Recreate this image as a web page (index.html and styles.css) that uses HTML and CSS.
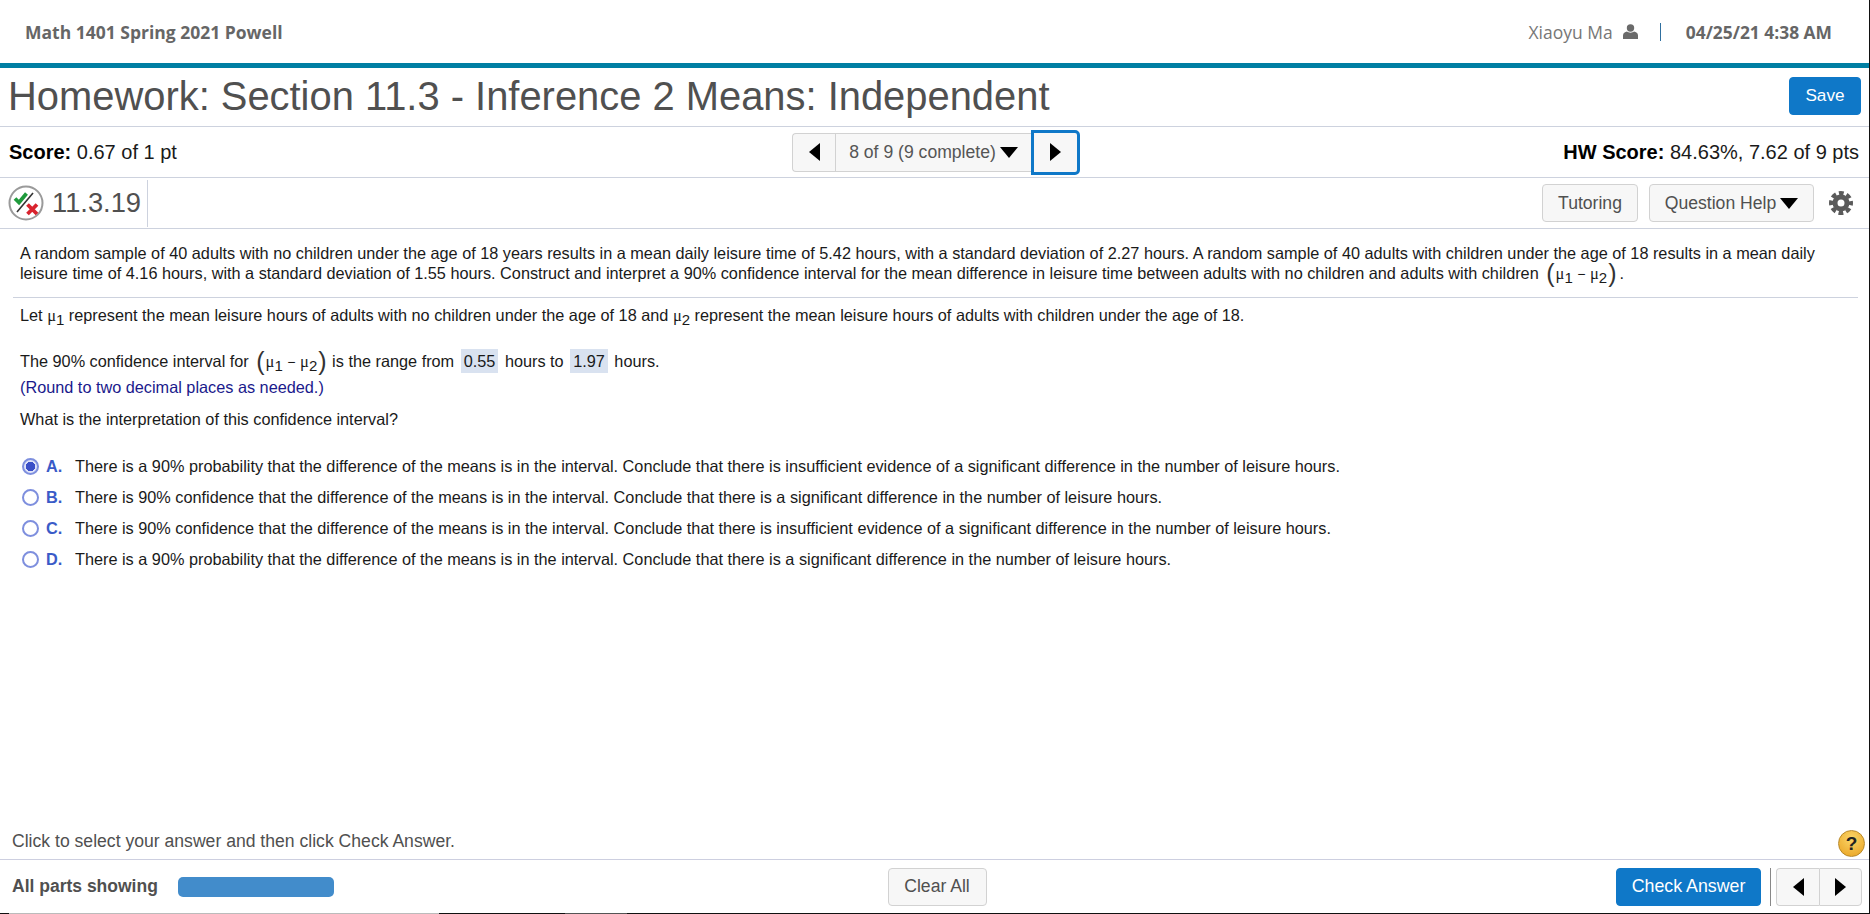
FILE: index.html
```html
<!DOCTYPE html>
<html lang="en">
<head>
<meta charset="utf-8">
<title>Homework: Section 11.3</title>
<link rel="stylesheet" href="styles.css">
</head>
<body>
<div class="page">
  <header class="topbar">
    <div class="course">Math 1401 Spring 2021 Powell</div>
    <div class="userinfo">
      <span class="username">Xiaoyu Ma</span>
      <svg class="usericon" width="15" height="15" viewBox="0 0 15 15"><circle cx="7.500" cy="4" r="3.700" fill="#6a6a6a"/><path d="M0 15V11.500C0 9 2 8 4 7.600 5.500 9 9.500 9 11 7.600 13 8 15 9 15 11.500V15Z" fill="#6a6a6a"/></svg>
      <span class="pipe"></span>
      <span class="datetime">04/25/21 4:38 AM</span>
    </div>
  </header>
  <div class="tealbar"></div>
  <div class="titlerow">
    <h1 class="title">Homework: Section 11.3 - Inference 2 Means: Independent</h1>
    <button class="btn primary save">Save</button>
  </div>
  <div class="scorerow">
    <div class="score"><b>Score:</b> 0.67 of 1 pt</div>
    <div class="pager">
      <button class="pg pg-prev"><i class="tri left"></i></button>
      <button class="pg pg-mid">8 of 9 (9 complete)<i class="tri down"></i></button>
      <button class="pg pg-next"><i class="tri right"></i></button>
    </div>
    <div class="score hw"><b>HW Score:</b> 84.63%, 7.62 of 9 pts</div>
  </div>
  <div class="qrow">
    <div class="qid">
      <svg class="qicon" width="36" height="36" viewBox="0 0 36 36">
        <circle cx="18" cy="18" r="16.500" fill="#fff" stroke="#9a9a9a" stroke-width="2"/>
        <path d="M9 27 25 8" stroke="#333" stroke-width="1.600" fill="none"/>
        <path d="M7 13.500 11 17.500 18.500 8.500" stroke="#1f9a3c" stroke-width="3.800" fill="none"/>
        <path d="M19.500 19.500 29 29M29 19.500 19.500 29" stroke="#d9232e" stroke-width="3.800" fill="none"/>
      </svg>
      <span class="qnum">11.3.19</span>
    </div>
    <div class="qtools">
      <button class="btn tool">Tutoring</button>
      <button class="btn tool help">Question Help<i class="tri down"></i></button>
      <svg class="gear" width="24" height="24" viewBox="0 0 24 24"><circle cx="12" cy="12" r="10" fill="none" stroke="#5a5a5a" stroke-width="4" stroke-dasharray="4.800 3.054" stroke-dashoffset="2.400"/><circle cx="12" cy="12" r="6" fill="none" stroke="#5a5a5a" stroke-width="5"/></svg>
    </div>
  </div>
  <main class="content">
    <p class="stem">A random sample of 40 adults with no children under the age of 18 years results in a mean daily leisure time of 5.42 hours, with a standard deviation of 2.27 hours. A random sample of 40 adults with children under the age of 18 results in a mean daily leisure time of 4.16 hours, with a standard deviation of 1.55 hours. Construct and interpret a 90% confidence interval for the mean difference in leisure time between adults with no children and adults with children <span class="expr"><span class="paren">(</span><span class="mu">μ<sub>1</sub></span> <span class="minus">−</span> <span class="mu">μ<sub>2</sub></span><span class="paren">)</span></span><span class="dot">.</span></p>
    <hr class="rule">
    <p class="let">Let <span class="mu">μ<sub>1</sub></span> represent the mean leisure hours of adults with no children under the age of 18 and <span class="mu">μ<sub>2</sub></span> represent the mean leisure hours of adults with children under the age of 18.</p>
    <p class="ci">The 90% confidence interval for <span class="expr"><span class="paren">(</span><span class="mu">μ<sub>1</sub></span> <span class="minus">−</span> <span class="mu">μ<sub>2</sub></span><span class="paren">)</span></span> is the range from <span class="ans">0.55</span> hours to <span class="ans">1.97</span> hours.</p>
    <p class="hint">(Round to two decimal places as needed.)</p>
    <p class="ask">What is the interpretation of this confidence interval?</p>
    <ul class="choices">
      <li class="choice"><span class="radio on"></span><span class="letter">A.</span><span>There is a 90% probability that the difference of the means is in the interval. Conclude that there is insufficient evidence of a significant difference in the number of leisure hours.</span></li>
      <li class="choice"><span class="radio"></span><span class="letter">B.</span><span>There is 90% confidence that the difference of the means is in the interval. Conclude that there is a significant difference in the number of leisure hours.</span></li>
      <li class="choice"><span class="radio"></span><span class="letter">C.</span><span>There is 90% confidence that the difference of the means is in the interval. Conclude that there is insufficient evidence of a significant difference in the number of leisure hours.</span></li>
      <li class="choice"><span class="radio"></span><span class="letter">D.</span><span>There is a 90% probability that the difference of the means is in the interval. Conclude that there is a significant difference in the number of leisure hours.</span></li>
    </ul>
  </main>
  <div class="statusrow">
    <span class="status">Click to select your answer and then click Check Answer.</span>
    <span class="helpball">?</span>
  </div>
  <footer class="footer">
    <div class="parts"><b>All parts showing</b><span class="progress"></span></div>
    <button class="btn tool clear">Clear All</button>
    <div class="actions">
      <button class="btn primary check">Check Answer</button>
      <span class="sep"></span>
      <div class="navpair">
        <button class="pg"><i class="tri left"></i></button>
        <button class="pg"><i class="tri right"></i></button>
      </div>
    </div>
  </footer>
  <div class="bottomline"></div>
</div>
</body>
</html>
```
FILE: styles.css
```css
* { box-sizing: border-box; }
html, body { margin: 0; padding: 0; }
body { background: #fff; font-family: "Liberation Sans", Arial, sans-serif; color: #000; overflow: hidden; }
.page { width: 1870px; height: 914px; display: flex; flex-direction: column; border-right: 1px solid #111; }
button { font-family: inherit; cursor: pointer; margin: 0; }

.topbar { height: 63px; flex: none; display: flex; justify-content: space-between; align-items: center; padding: 0 37px 0 25px; font-family: "Open Sans", sans-serif; color: #666; font-size: 17.500px; }
.course { font-weight: 700; }
.userinfo { display: flex; align-items: center; }
.username { color: #777; }
.usericon { margin-left: 10px; }
.pipe { width: 1px; height: 18px; background: #2f6f9f; margin: 0 25px 0 22px; }
.datetime { font-weight: 700; font-size: 17.400px; }
.tealbar { height: 5px; flex: none; background: #007fa3; }

.titlerow { height: 59px; flex: none; display: flex; align-items: center; justify-content: space-between; padding: 0 8px 2px 8px; border-bottom: 1px solid #cdd2de; }
.title { margin: 0; font-size: 39.900px; font-weight: 400; color: #505050; line-height: 50px; }
.btn { border-radius: 4px; font-size: 17.600px; height: 38px; }
.primary { background: #0f78c8; border: 1px solid #0f78c8; color: #fff; }
.save { width: 72px; font-size: 17.200px; padding-bottom: 3px; }

.scorerow { height: 51px; flex: none; display: grid; grid-template-columns: 1fr auto 1fr; align-items: center; padding: 0 10px 0 9px; border-bottom: 1px solid #cdd2de; }
.score { font-size: 20px; color: #1a1a1a; }
.score b { color: #000; }
.hw { text-align: right; }
.pager { display: flex; height: 39px; align-items: stretch; margin-left: 4px; }
.pg { background: #f7f7f7; border: 1px solid #d2d2d2; color: #505050; padding: 0; display: flex; align-items: center; justify-content: center; }
.pg-prev { width: 43px; border-radius: 4px 0 0 4px; border-right: 0; }
.pg-mid { width: 197px; font-size: 17.600px; color: #555; }
.pg-next { width: 49px; height: 45px; margin-top: -3px; margin-left: -1px; background: #f7f7f7; border: 3px solid #0f78c8; border-radius: 0 5px 5px 0; }
.tri { display: inline-block; width: 0; height: 0; border-style: solid; }
.tri.left { border-width: 9px 11px 9px 0; border-color: transparent #000 transparent transparent; }
.tri.right { border-width: 9px 0 9px 11px; border-color: transparent transparent transparent #000; }
.tri.down { border-width: 11px 9px 0 9px; border-color: #000 transparent transparent transparent; margin-left: 4px; }

.qrow { height: 51px; flex: none; display: flex; justify-content: space-between; align-items: center; padding: 0 16px 0 8px; border-bottom: 1px solid #cdd2de; }
.qid { display: flex; align-items: center; height: 47px; width: 140px; border-right: 1px solid #cdd2de; }
.qicon { flex: none; }
.qnum { font-size: 27.300px; color: #505050; margin-left: 8px; }
.qtools { display: flex; align-items: center; }
.tool { background: #f7f7f7; border: 1px solid #d2d2d2; color: #505050; font-size: 17.600px; }
.qtools .tool { width: 96px; }
.qtools .help { width: 165px; margin-left: 11px; }
.gear { margin-left: 15px; }

.content { flex: 1; padding: 0 11px 0 20px; font-size: 16.270px; color: #1a1a1a; }
.content p { margin: 0; line-height: 20px; }
.content .stem { margin-top: 14px; }
.expr { white-space: nowrap; margin-left: 2px; }
.paren { font-size: 25px; color: #333; line-height: 0; vertical-align: -3px; margin: 0 1px; }
.mu { font-family: "Liberation Serif", serif; font-size: 16.500px; }
.mu sub { font-family: "Liberation Sans", sans-serif; font-size: 15px; line-height: 0; vertical-align: -4px; }
.minus { font-size: 14px; }
.dot { margin-left: 2px; }
.rule { border: 0; height: 1px; background: #cdd2de; margin: 13px 0 0 -7px; }
.content .let { margin-top: 7px; }
.content .ci { margin-top: 25px; }
.ans { background: #d9e2f0; padding: 3px 3px; margin: 0 2px; }
.content .hint { color: #1a1a8c; margin-top: 5px; }
.content .ask { margin-top: 12px; }
.choices { list-style: none; margin: 22px 0 0 2px; padding: 0; }
.choice { display: flex; align-items: center; height: 31px; }
.radio { width: 17px; height: 17px; border-radius: 50%; border: 2px solid #7e8fde; flex: none; margin-right: 7px; background: #fff; }
.radio.on { background: radial-gradient(circle, #3b50c8 0 4.500px, #dfe3f8 5px); }
.letter { width: 29px; flex: none; font-weight: 700; color: #3a5bc8; }

.statusrow { height: 46px; flex: none; display: flex; justify-content: space-between; align-items: center; padding: 9px 4px 0 12px; font-size: 17.600px; color: #505050; border-bottom: 1px solid #cdcfe0; }
.helpball { width: 27px; height: 27px; margin-top: 4px; border-radius: 50%; background: radial-gradient(circle at 50% 30%, #fbd568, #e8a120); border: 1px solid #b8892a; color: #222; font-weight: 700; font-size: 19px; text-align: center; line-height: 25px; }

.footer { height: 53px; flex: none; display: grid; grid-template-columns: 1fr auto 1fr; align-items: center; padding: 0 7px 0 12px; }
.parts { display: flex; align-items: center; font-size: 17.500px; color: #505050; }
.progress { width: 156px; height: 20px; border-radius: 5px; background: #428ccb; margin-left: 20px; }
.clear { width: 99px; }
.actions { display: flex; justify-content: flex-end; align-items: center; }
.check { width: 145px; font-size: 17.800px; }
.sep { width: 1px; height: 38px; background: #888; margin: 0 5px 0 9px; }
.navpair { display: flex; height: 38px; }
.navpair .pg { width: 43px; }
.navpair .pg:first-child { border-radius: 4px 0 0 4px; border-right: 0; }
.navpair .pg:last-child { border-radius: 0 4px 4px 0; }
.bottomline { height: 1px; flex: none; background: linear-gradient(to right, #111 9px, #bbb 9px, #bbb 439px, #111 439px, #111 565px, #555 565px, #555 627px, #111 627px); }
```
